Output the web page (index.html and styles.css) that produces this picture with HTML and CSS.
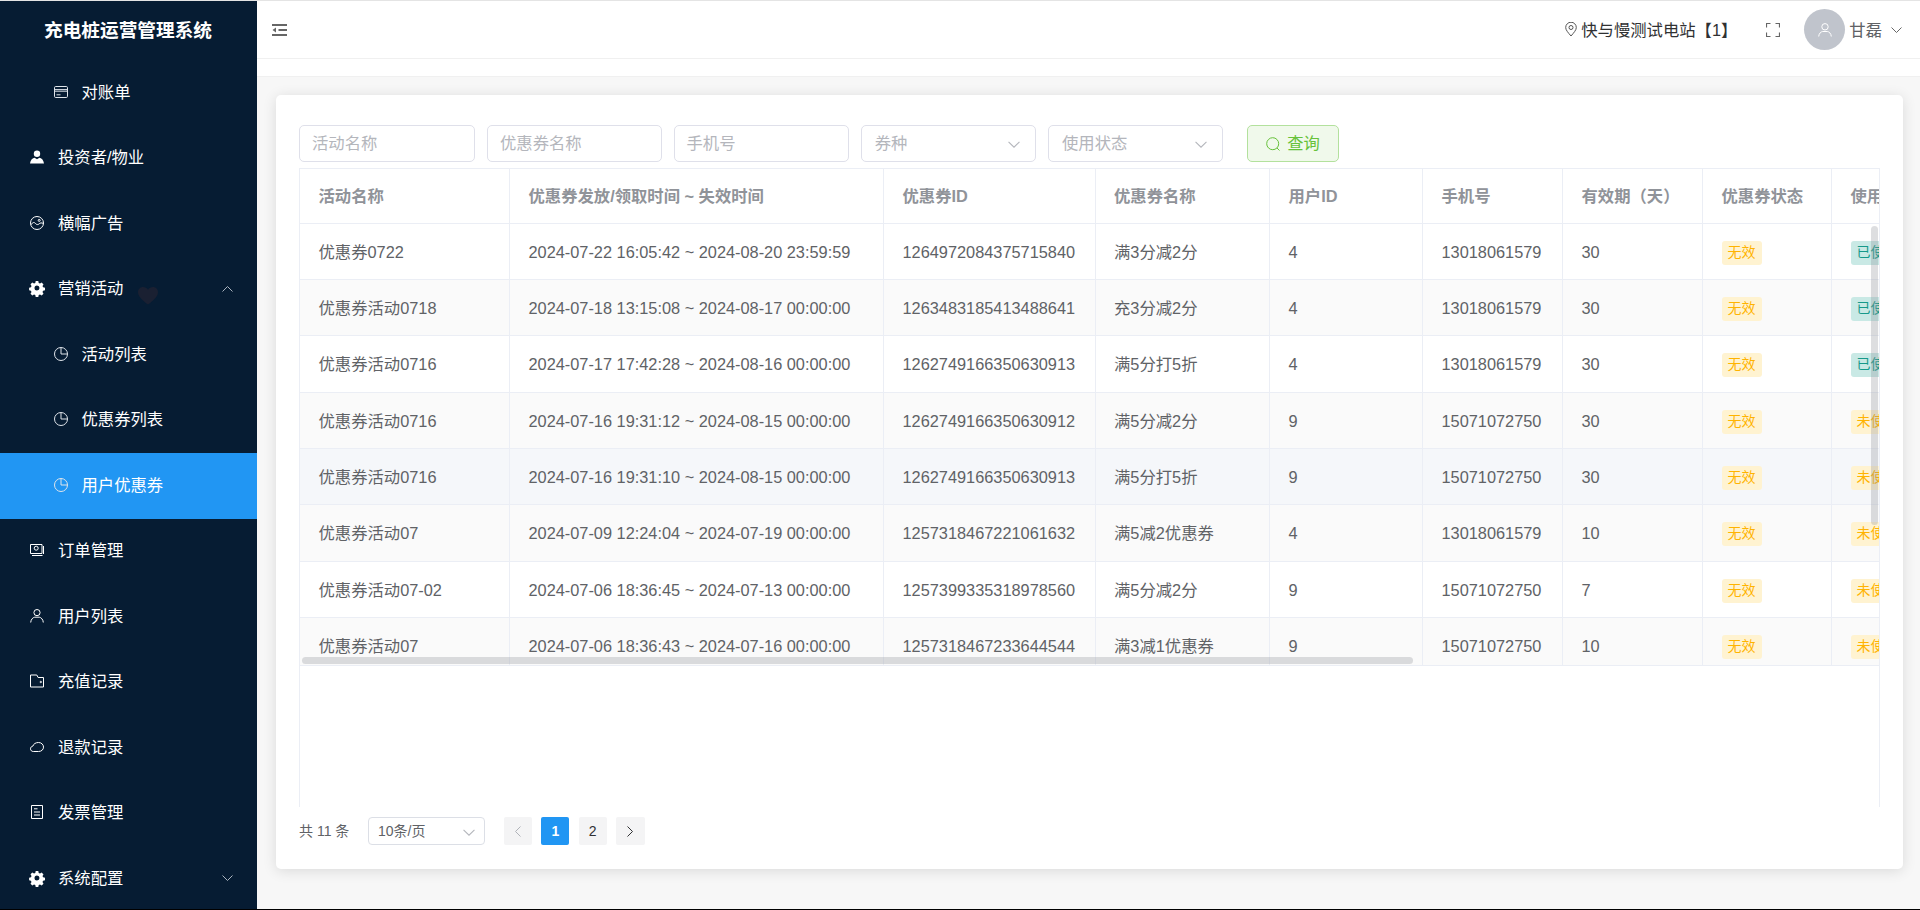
FILE: index.html
```html
<!DOCTYPE html>
<html lang="zh-CN">
<head>
<meta charset="utf-8">
<title>用户优惠券</title>
<link rel="stylesheet" href="styles.css">
</head>
<body>
<div class="app">
  <aside class="sidebar">
    <div class="logo">充电桩运营管理系统</div>
    <nav class="menu">
      <a class="item sub"><svg class="ic" viewBox="0 0 14 14"><rect x=".5" y="1.500" width="13" height="11" rx="1.200"/><path d="M.5 4.600h13M.5 6.200h13M2.500 9.800h4"/></svg>对账单</a>
      <a class="item"><svg class="ic solid" viewBox="0 0 14 14"><circle cx="7" cy="3.800" r="3.200"/><path d="M0 13.500c.3-3.600 2.800-5.600 4.600-5.800L7 9.300l2.400-1.600c1.800.2 4.300 2.200 4.600 5.800z"/></svg>投资者/物业</a>
      <a class="item"><svg class="ic" viewBox="0 0 14 14"><circle cx="7" cy="7" r="6.500"/><circle cx="9.200" cy="4.400" r="1"/><path d="M1.200 8.600c1.600-2.600 3-2.600 4.200-1.200 1.300 1.500 2.600 1.500 3.800.4 1-.9 2.300-1.300 4.200-.3"/></svg>横幅广告</a>
      <a class="item"><svg class="ic solid" viewBox="0 0 14 14"><path fill-rule="evenodd" d="M5.700 0h2.600l.4 1.900 1.300.6 1.700-1 1.800 1.900-1 1.600.6 1.300 1.900.4v2.600l-1.900.4-.6 1.300 1 1.700-1.800 1.800-1.700-1-1.300.6-.4 1.900H5.700l-.4-1.900-1.300-.6-1.700 1L.5 12.700l1-1.700-.6-1.300L-.9 9.300V6.700l1.900-.4.5-1.300-1-1.700L2.300 1.500l1.700 1 1.300-.6zM7 4.500a2.500 2.500 0 100 5 2.500 2.500 0 000-5z"/></svg>营销活动
        <svg class="heart" viewBox="0 0 20 18"><path d="M10 17.500C4 13 0 9.500 0 5.200 0 2.200 2.300 0 5 0c2 0 4 1 5 2.800C11 1 13 0 15 0c2.700 0 5 2.200 5 5.200 0 4.300-4 7.800-10 12.300z"/></svg>
        <svg class="arrow" viewBox="0 0 11 6"><path d="M.5 5.500l5-5 5 5"/></svg></a>
      <a class="item sub"><svg class="ic" viewBox="0 0 14 14"><circle cx="7" cy="7" r="6.500"/><path d="M7 .5V7h6.500"/></svg>活动列表</a>
      <a class="item sub"><svg class="ic" viewBox="0 0 14 14"><circle cx="7" cy="7" r="6.500"/><path d="M7 .5V7h6.500"/></svg>优惠券列表</a>
      <a class="item sub active"><svg class="ic" viewBox="0 0 14 14"><circle cx="7" cy="7" r="6.500"/><path d="M7 .5V7h6.500"/></svg>用户优惠券</a>
      <a class="item"><svg class="ic" viewBox="0 0 14 14"><path d="M.5 10.500V1.500H12v9z"/><circle cx="6.200" cy="5.200" r="2"/><path d="M2 12.500h10.500M13.500 3v8"/></svg>订单管理</a>
      <a class="item"><svg class="ic" viewBox="0 0 14 14"><circle cx="7" cy="3.600" r="3.100"/><path d="M.7 13.500c.2-3.200 2.200-5 4-5.300h4.600c1.800.3 3.800 2.100 4 5.300"/></svg>用户列表</a>
      <a class="item"><svg class="ic" viewBox="0 0 14 14"><path d="M.5 13V1h6.300l1.300 2.500h5.400V13z"/><circle cx="10.800" cy="8" r=".7"/></svg>充值记录</a>
      <a class="item"><svg class="ic" viewBox="0 0 14 14"><path d="M3.300 11.500C1.600 11.500.5 10.300.5 8.800c0-1.400 1-2.500 2.400-2.700C3.500 3.800 5.800 2.500 8.500 2.500c3 0 5 2.200 5 4.600 0 2.500-2 4.400-5 4.400z"/></svg>退款记录</a>
      <a class="item"><svg class="ic" viewBox="0 0 14 14"><path d="M1.500.5h11v13h-11zM4 3.800h3.500M4 7h6M4 10h6"/></svg>发票管理</a>
      <a class="item"><svg class="ic solid" viewBox="0 0 14 14"><path fill-rule="evenodd" d="M5.700 0h2.600l.4 1.900 1.300.6 1.700-1 1.800 1.900-1 1.600.6 1.300 1.900.4v2.600l-1.900.4-.6 1.300 1 1.700-1.800 1.800-1.700-1-1.300.6-.4 1.900H5.700l-.4-1.900-1.300-.6-1.700 1L.5 12.700l1-1.700-.6-1.300L-.9 9.300V6.700l1.900-.4.5-1.300-1-1.700L2.300 1.500l1.700 1 1.300-.6zM7 4.500a2.500 2.500 0 100 5 2.500 2.500 0 000-5z"/></svg>系统配置
        <svg class="arrow" viewBox="0 0 11 6"><path d="M.5.500l5 5 5-5"/></svg></a>
    </nav>
  </aside>
  <div class="right">
    <header class="topbar">
      <svg class="toggle" viewBox="0 0 15 12"><path d="M0 1h15M6.500 6H15M0 11h15"/><path class="fill" d="M4 3.500v5L.5 6z"/></svg>
      <div class="top-right">
        <span class="station"><svg class="pin" viewBox="0 0 12 15"><path d="M6 14C3 10.500 .7 8 .7 5.500a5.300 5.300 0 0110.600 0C11.300 8 9 10.500 6 14z"/><circle cx="6" cy="5.500" r="2"/></svg>快与慢测试电站【1】</span>
        <svg class="full" viewBox="0 0 14 14"><path d="M.5 4.500v-4h4M9.500.5h4v4M13.500 9.500v4h-4M4.500 13.500h-4v-4"/></svg>
        <span class="avatar"><svg viewBox="0 0 14 14"><circle cx="7" cy="3.800" r="3.200"/><path d="M.7 13.500c.2-3 2.200-4.800 4-5h4.600c1.800.2 3.800 2 4 5"/></svg></span>
        <span class="uname">甘磊</span>
        <svg class="uarrow" viewBox="0 0 11 6"><path d="M.5.500l5 5 5-5"/></svg>
      </div>
    </header>
    <div class="tabs"></div>
    <main class="content">
      <section class="card">
        <div class="filters">
          <div class="field f1">活动名称</div>
          <div class="field f2">优惠券名称</div>
          <div class="field">手机号</div>
          <div class="field select">券种<svg viewBox="0 0 11 6"><path d="M.5.500l5 5 5-5"/></svg></div>
          <div class="field select">使用状态<svg viewBox="0 0 11 6"><path d="M.5.500l5 5 5-5"/></svg></div>
          <button class="search"><svg viewBox="0 0 14 14"><circle cx="6.700" cy="6.700" r="6"/><path d="M11 11l2.500 2.500"/></svg>查询</button>
        </div>
        <div class="table-box">
          <div class="clip">
            <table class="grid">
              <colgroup><col class="c1"><col class="c2"><col class="c3"><col class="c4"><col class="c5"><col class="c6"><col class="c7"><col class="c8"><col class="c9"></colgroup>
              <thead><tr><th>活动名称</th><th>优惠券发放/领取时间 ~ 失效时间</th><th>优惠券ID</th><th>优惠券名称</th><th>用户ID</th><th>手机号</th><th>有效期（天）</th><th>优惠券状态</th><th>使用状态</th></tr></thead>
              <tbody>
                <tr><td>优惠券0722</td><td>2024-07-22 16:05:42 ~ 2024-08-20 23:59:59</td><td>1264972084375715840</td><td>满3分减2分</td><td>4</td><td>13018061579</td><td>30</td><td><span class="tag warn">无效</span></td><td><span class="tag ok">已使用</span></td></tr>
                <tr class="stripe"><td>优惠券活动0718</td><td>2024-07-18 13:15:08 ~ 2024-08-17 00:00:00</td><td>1263483185413488641</td><td>充3分减2分</td><td>4</td><td>13018061579</td><td>30</td><td><span class="tag warn">无效</span></td><td><span class="tag ok">已使用</span></td></tr>
                <tr><td>优惠券活动0716</td><td>2024-07-17 17:42:28 ~ 2024-08-16 00:00:00</td><td>1262749166350630913</td><td>满5分打5折</td><td>4</td><td>13018061579</td><td>30</td><td><span class="tag warn">无效</span></td><td><span class="tag ok">已使用</span></td></tr>
                <tr class="stripe"><td>优惠券活动0716</td><td>2024-07-16 19:31:12 ~ 2024-08-15 00:00:00</td><td>1262749166350630912</td><td>满5分减2分</td><td>9</td><td>15071072750</td><td>30</td><td><span class="tag warn">无效</span></td><td><span class="tag warn">未使用</span></td></tr>
                <tr class="hover"><td>优惠券活动0716</td><td>2024-07-16 19:31:10 ~ 2024-08-15 00:00:00</td><td>1262749166350630913</td><td>满5分打5折</td><td>9</td><td>15071072750</td><td>30</td><td><span class="tag warn">无效</span></td><td><span class="tag warn">未使用</span></td></tr>
                <tr class="stripe"><td>优惠券活动07</td><td>2024-07-09 12:24:04 ~ 2024-07-19 00:00:00</td><td>1257318467221061632</td><td>满5减2优惠券</td><td>4</td><td>13018061579</td><td>10</td><td><span class="tag warn">无效</span></td><td><span class="tag warn">未使用</span></td></tr>
                <tr><td>优惠券活动07-02</td><td>2024-07-06 18:36:45 ~ 2024-07-13 00:00:00</td><td>1257399335318978560</td><td>满5分减2分</td><td>9</td><td>15071072750</td><td>7</td><td><span class="tag warn">无效</span></td><td><span class="tag warn">未使用</span></td></tr>
                <tr class="stripe"><td>优惠券活动07</td><td>2024-07-06 18:36:43 ~ 2024-07-16 00:00:00</td><td>1257318467233644544</td><td>满3减1优惠券</td><td>9</td><td>15071072750</td><td>10</td><td><span class="tag warn">无效</span></td><td><span class="tag warn">未使用</span></td></tr>
              </tbody>
            </table>
            <i class="bar-v"></i>
            <i class="bar-h"></i>
          </div>
        </div>
        <div class="pager">
          <span class="total">共 11 条</span>
          <div class="size">10条/页<svg viewBox="0 0 11 6"><path d="M.5.500l5 5 5-5"/></svg></div>
          <div class="pages">
            <span class="pg off"><svg viewBox="0 0 6 11"><path d="M5.500.500l-5 5 5 5"/></svg></span>
            <span class="pg on">1</span>
            <span class="pg">2</span>
            <span class="pg next"><svg viewBox="0 0 6 11"><path d="M.5.500l5 5-5 5"/></svg></span>
          </div>
        </div>
      </section>
    </main>
  </div>
</div>
</body>
</html>
```

FILE: styles.css
```css
* { box-sizing: border-box; }
html, body { margin: 0; height: 100%; overflow: hidden; }
body { font-family: "Liberation Sans", "Noto Sans CJK SC", sans-serif; font-size: 16.33px; line-height: 20px; color: #606266; }
svg { display: block; fill: none; stroke-width: 1; }

.app { display: flex; height: 910px; border-top: 1px solid #e4e4e4; border-bottom: 1px solid #000; overflow: hidden; }

.sidebar { width: 257px; flex: none; background: #061c33; color: #fff; overflow: hidden; }
.logo { height: 59px; padding: 19px 1px 0 0; line-height: 22px; text-align: center; font-size: 18.67px; font-weight: 700; }
.item { display: flex; align-items: center; height: 65.5px; padding: 0 0 2px 30px; position: relative; }
.item.sub { padding-left: 54px; }
.item.active { background: #2196f3; }
.ic { width: 14px; height: 14px; margin-right: 14px; stroke: #fff; overflow: visible; flex: none; }
.item.sub .ic { margin-right: 13.5px; stroke: #dfe4ea; }
.ic.solid { fill: #fff; stroke: none; }
.arrow { position: absolute; left: 222px; top: 29px; width: 11px; height: 6px; stroke: #aab4bf; }
.heart { position: absolute; left: 138px; top: 30.5px; width: 20px; height: 18px; fill: #1a2032; }

.right { flex: 1; min-width: 0; display: flex; flex-direction: column; }
.topbar { height: 58px; flex: none; display: flex; align-items: center; padding: 0 18px 0 15px; background: #fff; border-bottom: 1px solid #f0f0f0; }
.toggle { width: 15px; height: 12px; stroke: #666; stroke-width: 2; margin-top: 1px; }
.toggle .fill { fill: #666; stroke: none; }
.top-right { margin-left: auto; display: flex; align-items: center; }
.station { display: flex; align-items: center; color: #303133; margin-right: 29px; }
.pin { width: 12px; height: 15px; margin-right: 4px; stroke: #555; }
.full { width: 14px; height: 14px; stroke: #666; stroke-width: 1.200; margin-right: 24px; }
.avatar { width: 41px; height: 41px; border-radius: 50%; background: #c0c4cc; display: flex; align-items: center; justify-content: center; margin-right: 4px; }
.avatar svg { width: 14px; height: 14px; stroke: #fff; }
.uname { margin-right: 9px; }
.uarrow { width: 11px; height: 6px; stroke: #666; }

.tabs { height: 18px; flex: none; background: #fff; border-bottom: 1px solid #f0f0f0; }
.content { flex: 1; min-height: 0; background: #f7f7f7; padding: 18px 17px 0 19px; }

.card { height: 774px; background: #fff; border-radius: 5px; box-shadow: 0 2px 14px rgba(0, 0, 0, .12); padding: 30px 23px 0 23px; }
.filters { display: flex; height: 37px; margin-bottom: 6px; }
.field { width: 175.25px; height: 37px; line-height: 35px; border: 1px solid #dfe0ea; border-radius: 5px; padding-left: 12px; color: #b4b6bc; margin-right: 12px; position: relative; flex: none; }
.field.f1 { width: 176px; }
.field.f2 { width: 174.5px; }
.field.select { padding-left: 13px; }
.field svg { position: absolute; right: 15px; top: 15px; width: 12px; height: 7px; stroke: #b4b6bc; }
.search { margin-left: 11.75px; width: 92px; height: 37px; line-height: 35px; border: 1px solid #b3e19d; border-radius: 5px; background: #f0f9eb; color: #67c23a; font-family: inherit; font-size: inherit; display: flex; align-items: center; justify-content: center; padding: 0; }
.search svg { width: 14px; height: 14px; margin-right: 7px; stroke: #67c23a; }

.table-box { height: 639px; border-top: 1px solid #ebeef5; border-left: 1px solid #ebeef5; border-right: 1px solid #ebeef5; }
.clip { height: 497px; overflow: hidden; border-bottom: 1px solid #ebeef5; position: relative; }
.grid { width: 1682px; table-layout: fixed; border-collapse: separate; border-spacing: 0; }
.c1 { width: 210px; } .c2 { width: 374px; } .c3 { width: 211.5px; } .c4 { width: 174.5px; } .c5 { width: 153px; }
.c6 { width: 140px; } .c7 { width: 140px; } .c8 { width: 129px; } .c9 { width: 150px; }
th, td { padding: 0 0 0 18.5px; text-align: left; white-space: nowrap; overflow: hidden; border-right: 1px solid #ebeef5; border-bottom: 1px solid #ebeef5; font-size: 16.33px; line-height: 20px; }
th { height: 55px; color: #909399; font-weight: 700; }
td { height: 56px; }
tbody tr:nth-child(3n) td { height: 57px; }
.stripe td { background: #fafafa; }
.hover td { background: #f5f7fa; }
.tag { display: inline-block; height: 24px; line-height: 23px; padding: 0 6px; font-size: 14px; border-radius: 3px; position: relative; top: 1px; }
.warn { background: #fff3d1; color: #ffb300; }
.ok { background: #c9e9e5; color: #17998a; }
.bar-v { position: absolute; left: 1571px; top: 57px; width: 7px; height: 299px; border-radius: 4px; background: rgba(144, 147, 153, .3); }
.bar-h { position: absolute; left: 2px; top: 488px; width: 1111px; height: 7px; border-radius: 4px; background: rgba(144, 147, 153, .3); }

.pager { display: flex; align-items: center; height: 28px; margin-top: 10px; font-size: 14px; }
.total { width: 69px; flex: none; }
.size { width: 117px; height: 28px; line-height: 26px; border: 1px solid #dcdfe6; border-radius: 4px; padding-left: 9px; position: relative; }
.size svg { position: absolute; right: 9px; top: 11px; width: 12px; height: 7px; stroke: #b4b6bc; }
.pages { display: flex; margin-left: 19px; gap: 9.33px; }
.pg { width: 28px; height: 28px; line-height: 28px; text-align: center; background: #f4f4f5; border-radius: 2px; color: #303133; display: flex; align-items: center; justify-content: center; }
.pg svg { width: 6px; height: 11px; stroke: #303133; }
.pg.off svg { stroke: #b0b3b9; }
.pg.next { width: 29px; }
.pg.on { background: #2196f3; color: #fff; font-weight: 700; }
```
